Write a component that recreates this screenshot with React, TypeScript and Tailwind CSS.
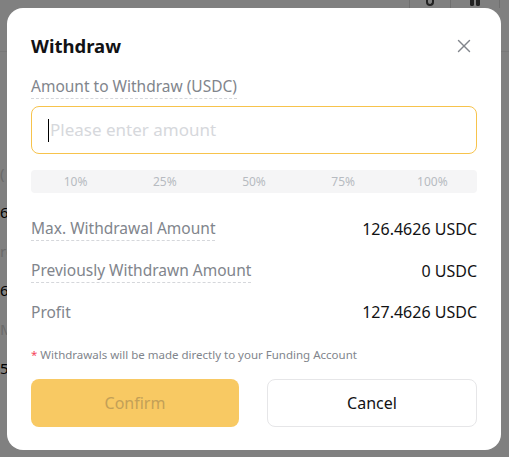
import { X } from "lucide-react";

const percents = ["10%", "25%", "50%", "75%", "100%"];

const rows = [
  { label: "Max. Withdrawal Amount", value: "126.4626 USDC", dashed: true },
  { label: "Previously Withdrawn Amount", value: "0 USDC", dashed: true },
  { label: "Profit", value: "127.4626 USDC", dashed: false },
];

// what shows of the page behind the overlay, on its left edge
const peek = [
  { t: "(", dim: true },
  { t: "6", dim: false },
  { t: "ro", dim: true },
  { t: "6", dim: false },
  { t: "M", dim: true },
  { t: "5", dim: false },
];

function Backdrop() {
  return (
    <div className="absolute inset-0 flex flex-col bg-[#808080]">
      <div className="flex h-[52px] justify-end border-b border-[#787878]">
        <div className="flex h-[8px]">
          <div className="flex w-[41px] justify-center border-l border-[#707070]">
            <span className="h-[6px] w-[8px] rounded-b-full border-2 border-t-0 border-[#222]" />
          </div>
          <div className="flex w-[50px] justify-center gap-[2px] border-l border-r border-[#707070] mr-[9px]">
            <span className="h-[6px] w-[4px] rounded-b-full border-2 border-t-0 border-[#222]" />
            <span className="h-[6px] w-[4px] rounded-b-full border-2 border-t-0 border-[#222]" />
          </div>
        </div>
      </div>
      <div className="flex flex-col gap-[17px] pt-[110px] text-[15px] leading-[22px]">
        {peek.map((p, i) => (
          <span key={i} className={p.dim ? "text-[#6a6a6a]" : "text-black"}>
            {p.t}
          </span>
        ))}
      </div>
    </div>
  );
}

export default function App() {
  return (
    <div
      className="relative h-[457px] w-[509px] overflow-hidden"
      style={{ fontFamily: "'Noto Sans', Inter, sans-serif" }}
    >
      <Backdrop />
      <div className="absolute left-[7px] top-[8px] w-[494px] h-[442px] rounded-[16px] bg-white px-6 pt-[24px]">
        <div className="flex items-center justify-between">
          <h2 className="text-[18.5px] font-bold leading-[28px] text-[#121214]">Withdraw</h2>
          <X className="mr-[2px] h-[22px] w-[22px] text-[#81858c]" strokeWidth={1.5} />
        </div>

        <div className="mt-[14px]">
          <span className="border-b border-dashed border-[#d5d7db] pb-[1px] text-[15.5px] leading-[20px] text-[#81858c]">
            Amount to Withdraw (USDC)
          </span>
        </div>

        <div className="mt-[8px] flex h-[48px] items-center rounded-[8px] border border-[#f7c34c] px-4">
          <span className="mr-[1px] h-[23px] w-px bg-black" />
          <span className="text-[17px] text-[#d6d8dc]">Please enter amount</span>
        </div>

        <div className="mt-[16px] grid h-[23px] grid-cols-5 items-center rounded-[4px] bg-[#f5f5f6] text-[12px] text-[#b7bbc1]">
          {percents.map((p) => (
            <div key={p} className="text-center">
              {p}
            </div>
          ))}
        </div>

        <div className="mt-[24px] flex flex-col gap-[18px]">
          {rows.map((r) => (
            <div key={r.label} className="flex items-center justify-between leading-[23px]">
              <span
                className={
                  r.dashed
                    ? "border-b border-dashed border-[#d5d7db] text-[15.5px] text-[#81858c]"
                    : "text-[15.5px] text-[#81858c]"
                }
              >
                {r.label}
              </span>
              <span className="text-[16px] text-[#121214]">{r.value}</span>
            </div>
          ))}
        </div>

        <p className="mt-[23px] text-[11.5px] leading-[16px] text-[#81858c]">
          <span className="text-[#f6465d]">*</span> Withdrawals will be made directly to your Funding
          Account
        </p>

        <div className="mt-[16px] flex gap-[28px]">
          <button className="h-[48px] flex-1 rounded-[8px] bg-[#f8c963] text-[16px] text-[#c3a057]">
            Confirm
          </button>
          <button className="h-[48px] flex-1 rounded-[8px] border border-[#e6e6e8] bg-white text-[16px] text-[#121214]">
            Cancel
          </button>
        </div>
      </div>
    </div>
  );
}
